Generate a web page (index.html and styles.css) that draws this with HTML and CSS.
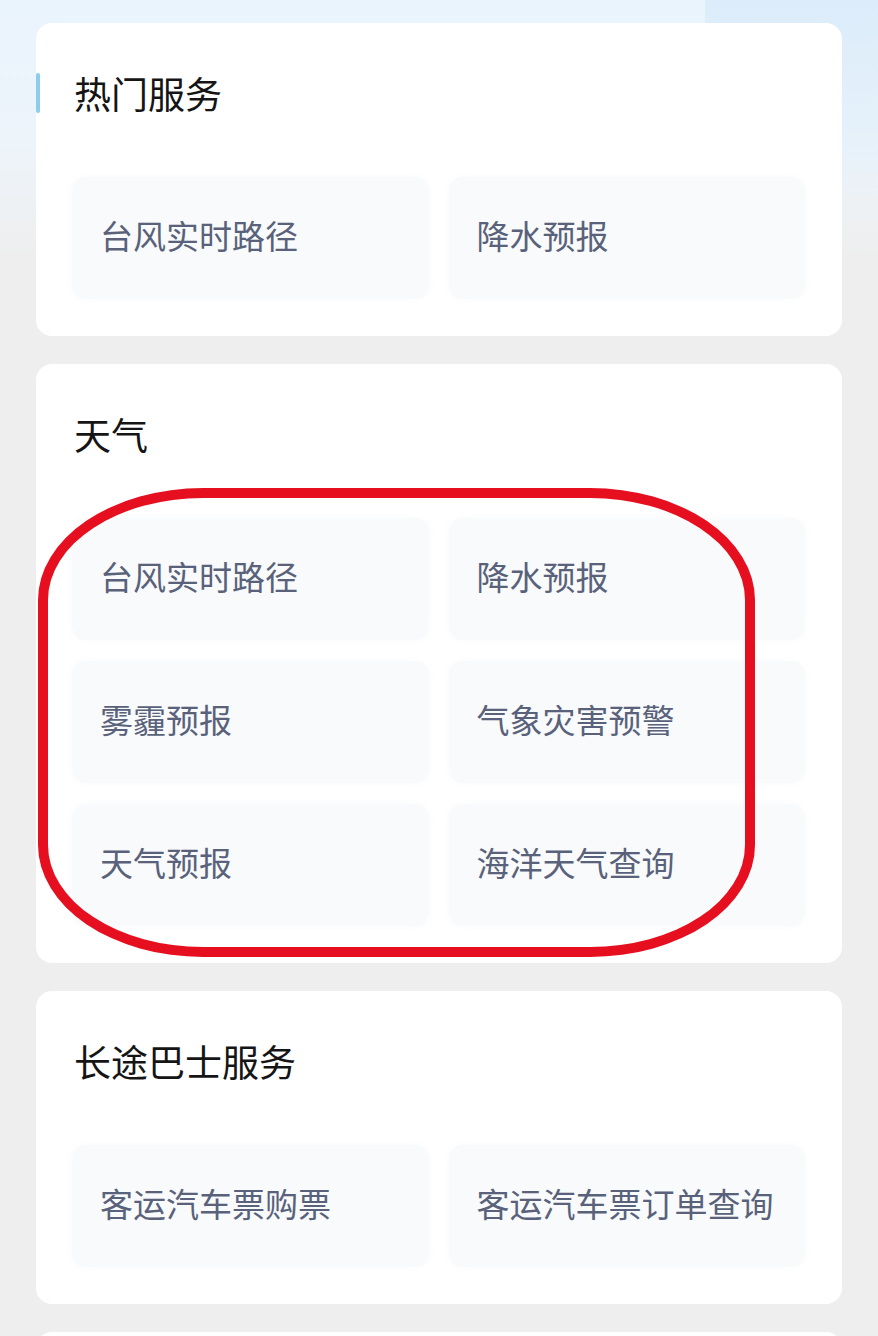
FILE: index.html
```html
<!DOCTYPE html>
<html lang="zh-CN">

<head>
    <meta charset="UTF-8">
    <meta name="viewport" content="width=device-width, initial-scale=1.0">
    <title>服务</title>
    <link rel="stylesheet" href="styles.css">
</head>

<body>
    <div class="page">
        <div class="card">
            <h2 class="card-title accent">热门服务</h2>
            <div class="tile-grid">
                <a class="tile" href="#">台风实时路径</a>
                <a class="tile" href="#">降水预报</a>
            </div>
        </div>

        <div class="card">
            <h2 class="card-title">天气</h2>
            <div class="tile-grid marked">
                <a class="tile" href="#">台风实时路径</a>
                <a class="tile" href="#">降水预报</a>
                <a class="tile" href="#">雾霾预报</a>
                <a class="tile" href="#">气象灾害预警</a>
                <a class="tile" href="#">天气预报</a>
                <a class="tile" href="#">海洋天气查询</a>
                <div class="mark-ring"></div>
            </div>
        </div>

        <div class="card">
            <h2 class="card-title">长途巴士服务</h2>
            <div class="tile-grid">
                <a class="tile" href="#">客运汽车票购票</a>
                <a class="tile" href="#">客运汽车票订单查询</a>
            </div>
        </div>

        <div class="card"></div>
    </div>
</body>

</html>
```

FILE: styles.css
```css
/*css*/
body {
    font-family: "Noto Sans CJK SC", "Noto Sans", sans-serif;
    background: #eeeeee;
    margin: 0;
    overflow: hidden;
    position: relative;
}

body::before {
    content: "";
    position: absolute;
    left: 0;
    top: 0;
    right: 0;
    height: 260px;
    background: linear-gradient(to bottom, #eaf4fd 0%, #edf4fa 55%, #eeeeee 100%);
}

body::after {
    content: "";
    position: absolute;
    left: 705px;
    top: 0;
    width: 173px;
    height: 200px;
    background: linear-gradient(to bottom, #dcecfa, #e6f1fa 70%, rgba(238, 238, 238, 0));
}

.page {
    position: relative;
    z-index: 1;
    padding: 23px 36px 0;
    display: flex;
    flex-direction: column;
    gap: 28px;
}

.card {
    background-color: #ffffff;
    border-radius: 16px;
    padding: 0 37px 37px 36px;
    position: relative;
}

.card-title {
    margin: 46px 0 60px 2px;
    font-size: 37px;
    line-height: 48px;
    font-weight: 400;
    color: #151515;
}

.card-title.accent::before {
    content: "";
    position: absolute;
    left: 0;
    top: 50px;
    width: 4px;
    height: 40px;
    border-radius: 2px;
    background-color: #8ccdee;
}

.tile-grid {
    display: grid;
    grid-template-columns: 1fr 1fr;
    grid-auto-rows: 122px;
    column-gap: 20px;
    row-gap: 21px;
    position: relative;
}

.tile {
    display: flex;
    align-items: center;
    padding: 0 0 6px 28px;
    background-color: #f8fafc;
    border-radius: 14px;
    box-shadow: 0 0 6px rgba(248, 250, 252, 0.9);
    font-size: 33px;
    color: #59627a;
    text-decoration: none;
}

.mark-ring {
    position: absolute;
    left: -34px;
    top: -30px;
    width: 697px;
    height: 449px;
    border: 10px solid #e60f1f;
    border-radius: 165px / 112px;
    pointer-events: none;
}
```
